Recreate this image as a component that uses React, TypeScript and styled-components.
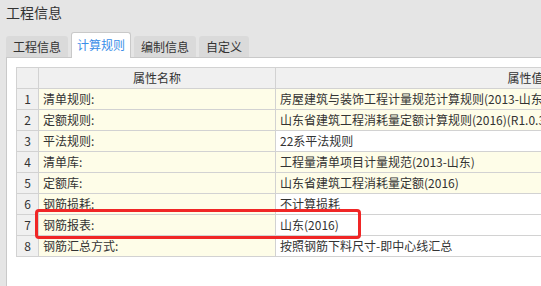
import React from 'react';
import styled, { createGlobalStyle } from 'styled-components';

const GlobalStyle = createGlobalStyle`
  html, body {
    margin: 0;
    padding: 0;
    background: #e5e5e5;
    font-family: "Noto Sans CJK SC", "Microsoft YaHei", sans-serif;
    color: #333;
    overflow: hidden;
  }
`;

const Window = styled.div`
  width: 541px;
  height: 286px;
  display: flex;
  flex-direction: column;
  overflow: hidden;
`;

const Title = styled.div`
  height: 26px;
  line-height: 24px;
  padding-left: 6px;
  font-size: 14px;
  color: #333;
`;

const TabBar = styled.div`
  display: flex;
  align-items: flex-end;
  gap: 3px;
  height: 31px;
  padding-left: 6px;
  position: relative;
  z-index: 1;
`;

const Tab = styled.div<{ $active?: boolean }>`
  box-sizing: border-box;
  height: ${(p) => (p.$active ? '26px' : '21px')};
  line-height: ${(p) => (p.$active ? '24px' : '21px')};
  padding: 0 ${(p) => (p.$active ? '5px' : '7px')};
  font-size: 12px;
  border-radius: 3px 3px 0 0;
  background: ${(p) => (p.$active ? '#fff' : '#dadada')};
  color: ${(p) => (p.$active ? '#3a8ee8' : '#333')};
  border: ${(p) => (p.$active ? '1px solid #c9c9c9' : 'none')};
  border-bottom: none;
  margin-bottom: ${(p) => (p.$active ? '-1px' : '0')};
`;

const Panel = styled.div`
  flex: 1;
  margin-left: 6px;
  background: #fff;
  border-top: 1px solid #c9c9c9;
  border-left: 1px solid #c9c9c9;
  padding: 9px 0 0 9px;
  overflow: hidden;
`;

const Grid = styled.div`
  position: relative;
  display: grid;
  grid-template-columns: 22px 237px 500px;
  border-top: 1px solid #d2d2d2;
  border-left: 1px solid #d2d2d2;
  width: max-content;
  font-size: 12px;
`;

const Cell = styled.div<{ $kind: 'head' | 'num' | 'name' | 'value'; $cream?: boolean }>`
  box-sizing: border-box;
  height: 21px;
  line-height: 20px;
  border-right: 1px solid #d2d2d2;
  border-bottom: 1px solid #d2d2d2;
  white-space: nowrap;
  overflow: hidden;
  padding-left: ${(p) => (p.$kind === 'name' || p.$kind === 'value' ? '4px' : '0')};
  text-align: ${(p) => (p.$kind === 'head' || p.$kind === 'num' ? 'center' : 'left')};
  background: ${(p) =>
    p.$kind === 'head' || p.$kind === 'num'
      ? '#f0f0f0'
      : p.$kind === 'name' || p.$cream
      ? '#fefde8'
      : '#ffffff'};
  color: #333;
`;

// red annotation box drawn over row 7
const Highlight = styled.div`
  position: absolute;
  left: 18px;
  top: 141px;
  width: 326px;
  height: 30px;
  box-sizing: border-box;
  border: 3px solid #f02626;
  border-radius: 4px;
  pointer-events: none;
`;

const rows = [
  { name: '清单规则:', value: '房屋建筑与装饰工程计量规范计算规则(2013-山东)', cream: true },
  { name: '定额规则:', value: '山东省建筑工程消耗量定额计算规则(2016)(R1.0.32)', cream: true },
  { name: '平法规则:', value: '22系平法规则', cream: false },
  { name: '清单库:', value: '工程量清单项目计量规范(2013-山东)', cream: true },
  { name: '定额库:', value: '山东省建筑工程消耗量定额(2016)', cream: true },
  { name: '钢筋损耗:', value: '不计算损耗', cream: false },
  { name: '钢筋报表:', value: '山东(2016)', cream: false },
  { name: '钢筋汇总方式:', value: '按照钢筋下料尺寸-即中心线汇总', cream: false },
];

const tabs = ['工程信息', '计算规则', '编制信息', '自定义'];

export default function App() {
  return (
    <Window>
      <GlobalStyle />
      <Title>工程信息</Title>
      <TabBar>
        {tabs.map((t, i) => (
          <Tab key={t} $active={i === 1}>
            {t}
          </Tab>
        ))}
      </TabBar>
      <Panel>
        <Grid>
          <Cell $kind="head" />
          <Cell $kind="head">属性名称</Cell>
          <Cell $kind="head">属性值</Cell>
          {rows.map((r, i) => (
            <React.Fragment key={r.name}>
              <Cell $kind="num">{i + 1}</Cell>
              <Cell $kind="name">{r.name}</Cell>
              <Cell $kind="value" $cream={r.cream}>
                {r.value}
              </Cell>
            </React.Fragment>
          ))}
          <Highlight />
        </Grid>
      </Panel>
    </Window>
  );
}
